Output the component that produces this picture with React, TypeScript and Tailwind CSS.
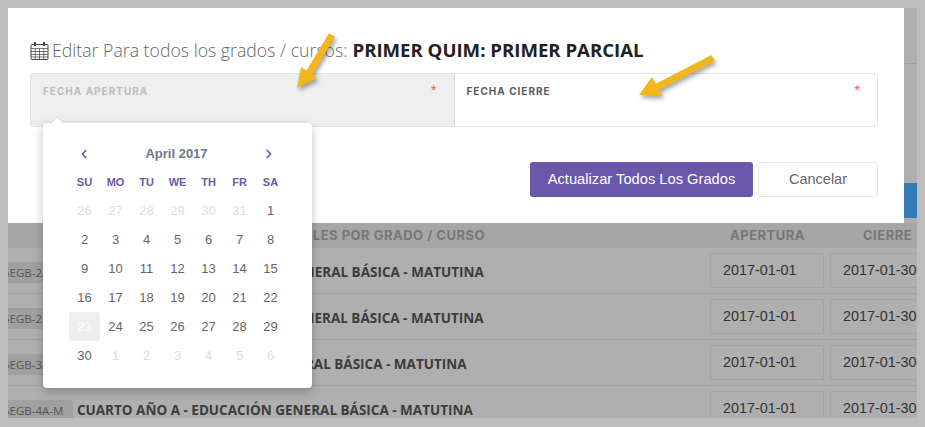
import { FaChevronLeft, FaChevronRight } from "react-icons/fa";

const weeks = [
  ["26", "27", "28", "29", "30", "31", "1"],
  ["2", "3", "4", "5", "6", "7", "8"],
  ["9", "10", "11", "12", "13", "14", "15"],
  ["16", "17", "18", "19", "20", "21", "22"],
  ["23", "24", "25", "26", "27", "28", "29"],
  ["30", "1", "2", "3", "4", "5", "6"],
];
const days = ["SU", "MO", "TU", "WE", "TH", "FR", "SA"];

const rows = [
  { code: "5EGB-2A-M", name: "SEGUNDO AÑO A - EDUCACIÓN GENERAL BÁSICA - MATUTINA" },
  { code: "5EGB-2B-M", name: "SEGUNDO AÑO B - EDUCACIÓN GENERAL BÁSICA - MATUTINA" },
  { code: "5EGB-3A-M", name: "TERCER AÑO A - EDUCACIÓN GENERAL BÁSICA - MATUTINA" },
  { code: "5EGB-4A-M", name: "CUARTO AÑO A - EDUCACIÓN GENERAL BÁSICA - MATUTINA" },
];

function CalendarIcon() {
  return (
    <svg width="19" height="19" viewBox="0 0 19 19" fill="none" stroke="#444" strokeWidth="1">
      <rect x="1" y="3.5" width="17" height="15" rx="1" />
      <path d="M1 7.5h17M1 10.5h17M1 13.5h17M1 16h17M5.2 7.5v11M9.5 7.5v11M13.8 7.5v11" strokeWidth="0.7" />
      <path d="M5 1v4M14 1v4" strokeWidth="2" />
    </svg>
  );
}

function Arrow({ className, d, head }: { className: string; d: string; head: string }) {
  return (
    <svg className={`${className} drop-shadow-[2px_3px_2px_rgba(0,0,0,0.35)]`} width="90" height="70" viewBox="0 0 90 70">
      <path d={d} stroke="#f3b71d" strokeWidth="7" fill="none" />
      <path d={head} fill="#f3b71d" />
    </svg>
  );
}

function DatePicker() {
  return (
    <div className="absolute left-[35px] top-[115px] w-[269px] h-[265px] rounded-[4px] bg-white shadow-[0_3px_10px_rgba(0,0,0,0.25)] font-['Liberation_Sans',sans-serif]">
      <div className="absolute left-[9px] -top-[5px] w-[10px] h-[10px] rotate-45 bg-white border-l border-t border-[#dcdcdc]" />
      <div className="flex items-center justify-between pl-[36px] pr-[38px] pt-[15px] h-[46px] text-[#6a5aad]">
        <FaChevronLeft size={10} />
        <span className="text-[13px] font-bold text-[#6c7a8c]">April 2017</span>
        <FaChevronRight size={10} />
      </div>
      <div className="grid grid-cols-[repeat(7,31px)] pl-[26px] h-[27px] items-center text-center text-[11px] font-bold text-[#6a5aad]">
        {days.map((d) => (
          <span key={d}>{d}</span>
        ))}
      </div>
      <div className="grid grid-cols-[repeat(7,31px)] auto-rows-[29px] pl-[26px] text-center text-[13px] text-[#666]">
        {weeks.flatMap((w, i) =>
          w.map((d, j) => {
            const muted = (i === 0 && j < 6) || (i === 5 && j > 0);
            const today = i === 4 && j === 0;
            return (
              <span
                key={`${i}-${j}`}
                className={
                  today
                    ? "flex items-center justify-center rounded-[3px] bg-[#eeeeee] text-white"
                    : muted
                      ? "flex items-center justify-center text-[#dddddd]"
                      : "flex items-center justify-center"
                }
              >
                {d}
              </span>
            );
          }),
        )}
      </div>
    </div>
  );
}

function Field({ label, active }: { label: string; active?: boolean }) {
  return (
    <div className={`relative flex-1 px-3 pt-[11px] ${active ? "bg-[#eeeeee] border-r border-[#dcdcdc]" : "bg-white"}`}>
      <span className={`block leading-[12px] text-[10px] font-bold tracking-[1px] font-['Inter',sans-serif] ${active ? "text-[#bdbdbd]" : "text-[#5a5a5a]"}`}>
        {label}
      </span>
      <span className="absolute right-[17px] top-[8px] text-[15px] leading-[15px] text-[#f0525a] font-['Liberation_Sans',sans-serif]">*</span>
    </div>
  );
}

export default function App() {
  return (
    <div className="w-[925px] h-[427px] bg-[#bdbdbd] pt-[8px] pl-[8px] pr-[8px] pb-[9px]">
      <div className="relative w-full h-full overflow-hidden bg-[#afafaf] font-['Open_Sans',sans-serif]">
        {/* page behind the modal */}
        <div className="absolute right-0 top-[175px] w-[13px] h-[35px] bg-[#337ab7]" />
        <div className="absolute right-0 top-[55px] w-[13px] h-[1px] bg-[#a0a0a0]" />
        <div className="pt-[215px]">
          <div className="flex h-[25px] items-center bg-[#a6a6a6] text-[13px] font-bold tracking-[0.5px] text-[#777] font-['Inter',sans-serif]">
            <span className="w-[477px] text-right whitespace-nowrap">PARCIALES POR GRADO / CURSO</span>
            <span className="ml-[245px] w-[74px]">APERTURA</span>
            <span className="ml-[59px] whitespace-nowrap">CIERRE</span>
          </div>
          {rows.map((r) => (
            <div key={r.code} className="flex h-[46px] items-center border-b border-[#a0a0a0] whitespace-nowrap">
              <span className="mt-[3px] -ml-[8px] w-[73px] shrink-0 h-[21px] bg-[#a0a0a0] pl-[3px] text-[11.5px] leading-[21px] text-[#555]">
                {r.code}
              </span>
              <span className="mt-[3px] ml-[4px] w-[633px] shrink-0 text-[13.5px] font-bold text-[#3c3c3c]">{r.name}</span>
              <span className="shrink-0 w-[114px] h-[35px] rounded-[2px] border border-[#a4a4a4] pl-[12px] text-[14.4px] leading-[33px] text-[#333] font-['Liberation_Sans',sans-serif]">
                2017-01-01
              </span>
              <span className="ml-[6px] shrink-0 w-[114px] h-[35px] rounded-[2px] border border-[#a4a4a4] pl-[12px] text-[14.4px] leading-[33px] text-[#333] font-['Liberation_Sans',sans-serif]">
                2017-01-30
              </span>
            </div>
          ))}
        </div>

        {/* modal */}
        <div className="absolute left-0 top-0 w-[896px] h-[215px] bg-white px-[22px] pt-[29px]">
          <h2 className="flex items-center h-[26px] font-light text-[#666] whitespace-nowrap">
            <CalendarIcon />
            <span className="ml-[3px] text-[17.7px]">Editar Para todos los grados / cursos:</span>
            <b className="ml-[5px] text-[18.6px] font-bold text-[#222]">PRIMER QUIM: PRIMER PARCIAL</b>
          </h2>
          <div className="mt-[10px] flex h-[54px] w-[848px] rounded-[2px] border border-[#e4e4e4]">
            <Field label="FECHA APERTURA" active />
            <Field label="FECHA CIERRE" />
          </div>
          <div className="mt-[35px] flex justify-end gap-[5px] w-[848px] font-['Liberation_Sans',sans-serif]">
            <button type="button" className="w-[223px] h-[35px] rounded-[3px] bg-[#6a58ab] text-[14.7px] text-white">
              Actualizar Todos Los Grados
            </button>
            <button type="button" className="w-[120px] h-[35px] rounded-[3px] border border-[#e8e8e8] bg-white text-[14.5px] text-[#666]">
              Cancelar
            </button>
          </div>
        </div>

        <DatePicker />

        <Arrow
          className="absolute left-[265px] top-[22px]"
          d="M59 5 L36 43"
          head="M24 58 L28 37 L44 48 Z"
        />
        <Arrow
          className="absolute left-[625px] top-[42px]"
          d="M80 8 L24 37"
          head="M6 45 L19 27 L29 46 Z"
        />
      </div>
    </div>
  );
}
